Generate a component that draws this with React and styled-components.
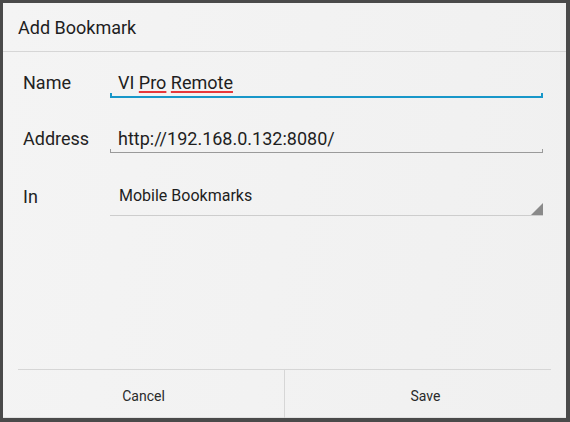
import React from "react";
import styled, { createGlobalStyle } from "styled-components";

const Global = createGlobalStyle`
  html, body { margin: 0; padding: 0; background: #4a4a4a; }
  body { font-family: Roboto, "Noto Sans", "Liberation Sans", sans-serif; }
`;

const Screen = styled.div`
  width: 570px;
  height: 422px;
  box-sizing: border-box;
  padding: 3px 4px 4px 3px;
  background: #4a4a4a;
`;

const Dialog = styled.div`
  width: 563px;
  height: 415px;
  display: flex;
  flex-direction: column;
  background: linear-gradient(100deg, #f4f4f4 0%, #f0f0f0 100%);
  box-shadow: 0 -1px 0 #e2e2e2 inset;
`;

const Header = styled.div`
  height: 48px;
  display: flex;
  align-items: center;
  padding-left: 15px;
  font-size: 18px;
  color: #1e1e1e;
  border-bottom: 1px solid #d6d6d6;
  flex: none;
`;

const Form = styled.div`
  flex: 1;
  display: flex;
  flex-direction: column;
  padding: 16px 23px 0 20px;
`;

const Row = styled.div`
  display: flex;
  margin-top: ${(p) => p.$gap || 0}px;
`;

const Label = styled.div`
  width: 87px;
  flex: none;
  display: flex;
  align-items: center;
  font-size: 18px;
  color: #222;
  padding-bottom: ${(p) => p.$shift || 0}px;
  box-sizing: border-box;
`;

const Field = styled.div`
  position: relative;
  flex: 1;
  height: ${(p) => p.$h}px;
  box-sizing: border-box;
  display: flex;
  align-items: center;
  padding-left: ${(p) => p.$pad || 8}px;
  font-size: ${(p) => p.$size || 18}px;
  color: #1e1e1e;
  border-bottom: ${(p) => p.$line}px solid ${(p) => p.$color};

  ${(p) =>
    p.$ticks &&
    `
    &::before, &::after {
      content: "";
      position: absolute;
      bottom: 0;
      width: ${p.$line}px;
      height: ${p.$line + 3}px;
      background: ${p.$color};
      margin-bottom: -${p.$line}px;
    }
    &::before { left: 0; }
    &::after { right: 0; }
  `}
`;

const Misspelled = styled.span`
  text-decoration: underline;
  text-decoration-color: #e8383b;
  text-decoration-thickness: 2px;
  text-underline-offset: 2px;
  text-decoration-skip-ink: none;
`;

const Corner = styled.svg`
  position: absolute;
  right: 0;
  bottom: 0;
  width: 12px;
  height: 12px;
`;

const Buttons = styled.div`
  flex: none;
  height: 48px;
  margin: 0 15px;
  border-top: 1px solid #d6d6d6;
  display: flex;
`;

const Button = styled.div`
  flex: 1;
  display: flex;
  align-items: center;
  justify-content: center;
  padding-top: 3px;
  font-size: 14px;
  color: #2a2a2a;
  margin: ${(p) => (p.$left ? "0 0 0 -15px" : "0 -15px 0 0")};
  border-left: ${(p) => (p.$left ? "none" : "1px solid #d6d6d6")};
`;

export default function App() {
  return (
    <>
      <Global />
      <Screen>
        <Dialog>
          <Header>Add Bookmark</Header>
          <Form>
            <Row>
              <Label $shift={2}>Name</Label>
              <Field $h={30} $line={2} $color="#1897c9" $ticks>
                VI&nbsp;<Misspelled>Pro</Misspelled>&nbsp;<Misspelled>Remote</Misspelled>
              </Field>
            </Row>
            <Row $gap={26}>
              <Label>Address</Label>
              <Field $h={29} $line={1} $color="#9a9a9a" $ticks>
                http://192.168.0.132:8080/
              </Field>
            </Row>
            <Row $gap={23}>
              <Label>In</Label>
              <Field $h={40} $line={1} $color="#cdcdcd" $size={16} $pad={9}>
                Mobile Bookmarks
                <Corner viewBox="0 0 12 12">
                  <polygon points="12,0 12,12 0,12" fill="#8a8a8a" />
                </Corner>
              </Field>
            </Row>
          </Form>
          <Buttons>
            <Button $left>Cancel</Button>
            <Button>Save</Button>
          </Buttons>
        </Dialog>
      </Screen>
    </>
  );
}
